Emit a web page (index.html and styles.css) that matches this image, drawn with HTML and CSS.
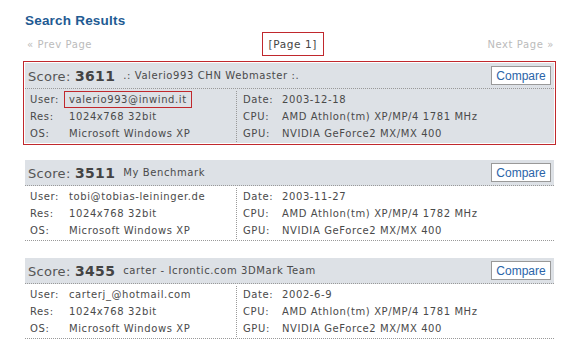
FILE: index.html
```html
<!DOCTYPE html>
<html lang="en">
<head>
  <meta charset="UTF-8">
  <title>Search Results</title>
  <link rel="stylesheet" href="styles.css">
</head>
<body>
<div class="container">
  <h1>Search Results</h1>
  <div class="pager">
    <span class="pager-link">&laquo; Prev Page</span>
    <span class="pager-current">[Page 1]</span>
    <span class="pager-link">Next Page &raquo;</span>
  </div>

  <div class="result selected">
    <div class="result-head">
      <span class="score">Score: <b>3611</b></span>
      <span class="name">.: Valerio993 CHN Webmaster :.</span>
      <button class="compare">Compare</button>
    </div>
    <div class="result-body">
      <div class="col">
        <div class="row"><span class="lbl">User:</span><span class="val mark">valerio993@inwind.it</span></div>
        <div class="row"><span class="lbl">Res:</span><span class="val">1024x768 32bit</span></div>
        <div class="row"><span class="lbl">OS:</span><span class="val">Microsoft Windows XP</span></div>
      </div>
      <div class="col right">
        <div class="row"><span class="lbl">Date:</span><span class="val">2003-12-18</span></div>
        <div class="row"><span class="lbl">CPU:</span><span class="val">AMD Athlon(tm) XP/MP/4 1781 MHz</span></div>
        <div class="row"><span class="lbl">GPU:</span><span class="val">NVIDIA GeForce2 MX/MX 400</span></div>
      </div>
    </div>
  </div>

  <div class="result">
    <div class="result-head">
      <span class="score">Score: <b>3511</b></span>
      <span class="name">My Benchmark</span>
      <button class="compare">Compare</button>
    </div>
    <div class="result-body">
      <div class="col">
        <div class="row"><span class="lbl">User:</span><span class="val">tobi@tobias-leininger.de</span></div>
        <div class="row"><span class="lbl">Res:</span><span class="val">1024x768 32bit</span></div>
        <div class="row"><span class="lbl">OS:</span><span class="val">Microsoft Windows XP</span></div>
      </div>
      <div class="col right">
        <div class="row"><span class="lbl">Date:</span><span class="val">2003-11-27</span></div>
        <div class="row"><span class="lbl">CPU:</span><span class="val">AMD Athlon(tm) XP/MP/4 1782 MHz</span></div>
        <div class="row"><span class="lbl">GPU:</span><span class="val">NVIDIA GeForce2 MX/MX 400</span></div>
      </div>
    </div>
  </div>

  <div class="result">
    <div class="result-head">
      <span class="score">Score: <b>3455</b></span>
      <span class="name">carter - Icrontic.com 3DMark Team</span>
      <button class="compare">Compare</button>
    </div>
    <div class="result-body">
      <div class="col">
        <div class="row"><span class="lbl">User:</span><span class="val">carterj_@hotmail.com</span></div>
        <div class="row"><span class="lbl">Res:</span><span class="val">1024x768 32bit</span></div>
        <div class="row"><span class="lbl">OS:</span><span class="val">Microsoft Windows XP</span></div>
      </div>
      <div class="col right">
        <div class="row"><span class="lbl">Date:</span><span class="val">2002-6-9</span></div>
        <div class="row"><span class="lbl">CPU:</span><span class="val">AMD Athlon(tm) XP/MP/4 1781 MHz</span></div>
        <div class="row"><span class="lbl">GPU:</span><span class="val">NVIDIA GeForce2 MX/MX 400</span></div>
      </div>
    </div>
  </div>
</div>
</body>
</html>
```

FILE: styles.css
```css
body { margin: 0; font-family: "DejaVu Sans", Verdana, sans-serif; font-size: 10px; letter-spacing: 0.6px; color: #4a4a4a; background: #fff; }
.container { width: 529px; padding: 13px 0 0 25px; }
h1 { margin: 0; font-family: "Liberation Sans", Arial, sans-serif; font-size: 13.5px; line-height: 16px; font-weight: bold; letter-spacing: 0.2px; color: #1f5b93; }
.pager { display: flex; justify-content: space-between; align-items: center; height: 26px; margin: 2px 0 6px; padding: 0 0 0 2px; }
.pager-link { color: #bbb; }
.pager-current { color: #444; font-size: 10.5px; border: 1px solid #c0282d; padding: 5px 6px; margin-left: 6px; }
.result { margin-bottom: 17px; }
.result.selected { background: #dde1e6; outline: 1px solid #c0282d; outline-offset: 1px; }
.result-head { display: flex; align-items: center; height: 25px; background: #dde1e6; border-bottom: 1px dotted #999; padding: 0 3px; }
.score { font-size: 13px; letter-spacing: 0.3px; color: #555; margin-right: 8px; }
.score b { font-size: 14px; color: #444; }
.name { flex: 1; }
.compare { font-family: "Liberation Sans", Arial, sans-serif; font-size: 12px; letter-spacing: 0; color: #2a64a8; background: #fff; border: 1px solid #999; height: 19px; width: 60px; padding: 0; }
.result-body { display: flex; padding: 2px 0 1px; border-bottom: 1px dotted #999; }
.selected .result-body { border-bottom: none; }
.col { width: 206px; padding-left: 5px; }
.col.right { flex: 1; border-left: 1px dotted #999; padding-left: 6px; }
.row { display: flex; height: 17px; align-items: center; }
.lbl { width: 39px; }
.mark { border: 1px solid #c0282d; margin-left: -5px; padding: 2px 4px; }
```
